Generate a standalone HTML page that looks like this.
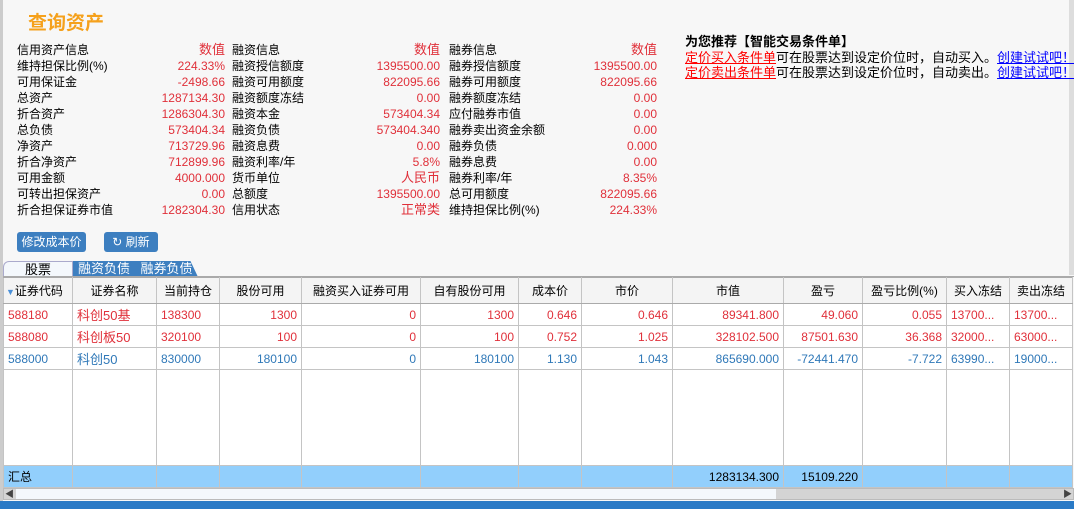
<!DOCTYPE html>
<html><head><meta charset="utf-8"><style>
*{margin:0;padding:0;box-sizing:border-box}
body{width:1074px;height:509px;overflow:hidden;background:#f7f7f7;font-family:"Liberation Sans","Noto Sans CJK SC","WenQuanYi Zen Hei",sans-serif;font-size:12px;color:#000;position:relative}
.a{position:absolute;white-space:nowrap}
.r{color:#e0303a}
.b{color:#2f78b8}
.info div{position:absolute;height:16px;line-height:16px;white-space:nowrap}
.v{text-align:right;color:#e0303a}
.btn{position:absolute;background:#3d7fc0;color:#fff;border-radius:3px;height:20px;line-height:20px;font-size:12px;text-align:center}
table{position:absolute;left:3px;top:277px;border-collapse:collapse;table-layout:fixed;background:#fff}
td{border:1px solid #c4c4c4;height:22px;padding:0 4px;white-space:nowrap;overflow:hidden}
tr.h td{background:#f4f4f4;text-align:center;height:26px;border-color:#aaa #c4c4c4}
td.n{text-align:right}
tr.s td{background:#92cffc}
</style></head><body>
<div style="position:absolute;left:0;top:0;width:3px;height:509px;background:#ccc"></div>
<div style="position:absolute;left:1069px;top:0;width:5px;height:275px;background:#ddd"></div>
<div class="a" style="left:28px;top:8px;font-size:19px;font-weight:bold;color:#f5a11c">查询资产</div>
<div class="info">
<div style="left:17px;top:42px">信用资产信息<br>维持担保比例(%)<br>可用保证金<br>总资产<br>折合资产<br>总负债<br>净资产<br>折合净资产<br>可用金额<br>可转出担保资产<br>折合担保证券市值</div>
<div class="v" style="left:120px;width:105px;top:42px"><span style="font-size:13px">数值</span><br>224.33%<br>-2498.66<br>1287134.30<br>1286304.30<br>573404.34<br>713729.96<br>712899.96<br>4000.000<br>0.00<br>1282304.30</div>
<div style="left:232px;top:42px">融资信息<br>融资授信额度<br>融资可用额度<br>融资额度冻结<br>融资本金<br>融资负债<br>融资息费<br>融资利率/年<br>货币单位<br>总额度<br>信用状态</div>
<div class="v" style="left:330px;width:110px;top:42px"><span style="font-size:13px">数值</span><br>1395500.00<br>822095.66<br>0.00<br>573404.34<br>573404.340<br>0.00<br>5.8%<br><span style="font-size:13px">人民币</span><br>1395500.00<br><span style="font-size:13px">正常类</span></div>
<div style="left:449px;top:42px">融券信息<br>融券授信额度<br>融券可用额度<br>融券额度冻结<br>应付融券市值<br>融券卖出资金余额<br>融券负债<br>融券息费<br>融券利率/年<br>总可用额度<br>维持担保比例(%)</div>
<div class="v" style="left:550px;width:107px;top:42px"><span style="font-size:13px">数值</span><br>1395500.00<br>822095.66<br>0.00<br>0.00<br>0.00<br>0.000<br>0.00<br>8.35%<br>822095.66<br>224.33%</div>
</div>
<div class="a" style="left:685px;top:34px;font-weight:bold;font-size:13px;line-height:16px">为您推荐【智能交易条件单】</div>
<div class="a" style="left:685px;top:50px;font-size:13px;line-height:15px"><u style="color:#f00">定价买入条件单</u>可在股票达到设定价位时，自动买入。<u style="color:#00f">创建试试吧！</u><br><u style="color:#f00">定价卖出条件单</u>可在股票达到设定价位时，自动卖出。<u style="color:#00f">创建试试吧！</u></div>
<div class="btn" style="left:17px;top:232px;width:69px">修改成本价</div>
<div class="btn" style="left:104px;top:232px;width:54px">&#x21BB; 刷新</div>
<div style="position:absolute;left:3px;top:261px;width:195px;height:16px;font-size:13px">
<div class="a" style="left:0;top:0;width:70px;height:16px;background:#f4f8fc;border:1px solid #aac;border-bottom:none;border-radius:6px 0 0 0;text-align:center;line-height:16px">股票</div>
<div class="a" style="left:70px;top:0;width:62px;height:16px;background:#3d7fc0;color:#fff;text-align:center;line-height:16px">融资负债</div>
<div class="a" style="left:132px;top:0;width:63px;height:16px;background:#3d7fc0;color:#fff;text-align:center;line-height:16px;clip-path:polygon(0 0,88% 0,100% 100%,0 100%)">融券负债</div>
</div>
<div style="position:absolute;left:3px;top:276px;width:1071px;height:1px;background:#aaa"></div>
<table>
<colgroup><col style="width:69px"><col style="width:84px"><col style="width:63px"><col style="width:82px"><col style="width:119px"><col style="width:98px"><col style="width:63px"><col style="width:91px"><col style="width:111px"><col style="width:79px"><col style="width:84px"><col style="width:63px"><col style="width:63px"></colgroup>
<tr class="h"><td style="text-align:left;padding-left:2px"><span style="color:#4a90d9;font-size:9px">▼</span>证券代码</td><td>证券名称</td><td>当前持仓</td><td>股份可用</td><td>融资买入证券可用</td><td>自有股份可用</td><td>成本价</td><td>市价</td><td>市值</td><td>盈亏</td><td>盈亏比例(%)</td><td>买入冻结</td><td>卖出冻结</td></tr>
<tr class="r"><td>588180</td><td style="font-size:13px">科创50基</td><td>138300</td><td class="n">1300</td><td class="n">0</td><td class="n">1300</td><td class="n">0.646</td><td class="n">0.646</td><td class="n">89341.800</td><td class="n">49.060</td><td class="n">0.055</td><td>13700...</td><td>13700...</td></tr>
<tr class="r"><td>588080</td><td style="font-size:13px">科创板50</td><td>320100</td><td class="n">100</td><td class="n">0</td><td class="n">100</td><td class="n">0.752</td><td class="n">1.025</td><td class="n">328102.500</td><td class="n">87501.630</td><td class="n">36.368</td><td>32000...</td><td>63000...</td></tr>
<tr class="b"><td>588000</td><td style="font-size:13px">科创50</td><td>830000</td><td class="n">180100</td><td class="n">0</td><td class="n">180100</td><td class="n">1.130</td><td class="n">1.043</td><td class="n">865690.000</td><td class="n">-72441.470</td><td class="n">-7.722</td><td>63990...</td><td>19000...</td></tr>
<tr><td style="height:96px"></td><td></td><td></td><td></td><td></td><td></td><td></td><td></td><td></td><td></td><td></td><td></td><td></td></tr>
<tr class="s"><td>汇总</td><td></td><td></td><td></td><td></td><td></td><td></td><td></td><td class="n">1283134.300</td><td class="n">15109.220</td><td></td><td></td><td></td></tr>
</table>
<div style="position:absolute;left:3px;top:488px;width:1071px;height:12px;background:#d4d4d4;border:1px solid #bbb"></div>
<div style="position:absolute;left:16px;top:489px;width:760px;height:10px;background:#f4f8fc"></div>
<div class="a" style="left:5px;top:487px;font-size:9px;color:#444">◀</div>
<div class="a" style="left:1063px;top:487px;font-size:9px;color:#444">▶</div>
<div style="position:absolute;left:0;top:501px;width:1074px;height:8px;background:#2a7ac6"></div>
</body></html>
